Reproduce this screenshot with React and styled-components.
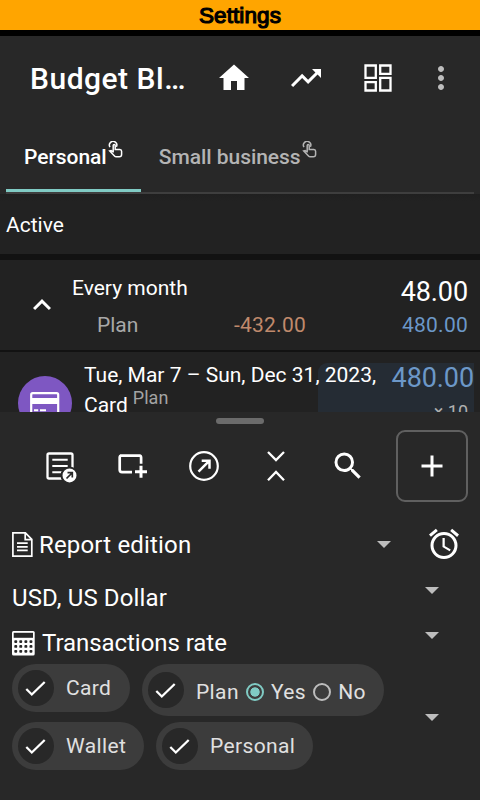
import React from "react";
import styled, { createGlobalStyle } from "styled-components";
import { MdHome, MdTrendingUp, MdMoreVert, MdSearch, MdAdd, MdAlarm, MdExpandLess } from "react-icons/md";

const Global = createGlobalStyle`
  * { box-sizing: border-box; }
  body { margin: 0; background: #282828; overflow: hidden; }
`;

const Screen = styled.div`
  width: 480px;
  height: 800px;
  display: flex;
  flex-direction: column;
  overflow: hidden;
  background: #222222;
  color: #ffffff;
  font-family: Roboto, sans-serif;
  white-space: nowrap;
`;

const Banner = styled.div`
  height: 36px;
  flex: none;
  background: #ffa500;
  border-bottom: 6px solid #000000;
  color: #000000;
  font: 22.5px/32px "Liberation Sans", sans-serif;
  -webkit-text-stroke: 1.2px #000000;
  letter-spacing: 0.1px;
  text-align: center;
`;

const AppBar = styled.header`
  height: 84px;
  flex: none;
  display: flex;
  align-items: center;
  padding-left: 30px;
  background: #282828;
`;

const Title = styled.h1`
  width: 168px;
  margin: 0;
  font-size: 30px;
  line-height: 36px;
  font-weight: 500;
  padding-top: 1px;
  letter-spacing: 0.5px;
`;

const BarAction = styled.button`
  width: ${(p) => p.$width || 72}px;
  height: 72px;
  padding: 0;
  border: 0;
  background: none;
  color: ${(p) => p.$color || "#ffffff"};
  display: flex;
  align-items: center;
  justify-content: center;
  svg { flex: none; }
`;

const AlarmAction = styled(BarAction)`
  margin-bottom: 1px;
`;

const Tabs = styled.nav`
  height: 74px;
  flex: none;
  padding: 0 6px;
  background: #282828;
`;

const TabStrip = styled.div`
  height: 74px;
  display: flex;
  border-bottom: 2px solid #3e3e3e;
`;

const Tab = styled.div`
  height: 72px;
  padding: 0 18px;
  display: flex;
  align-items: flex-start;
  border-bottom: 3px solid ${(p) => (p.$active ? "#80cbc4" : "transparent")};
  color: ${(p) => (p.$active ? "#ffffff" : "#b4b4b4")};
  font-size: 21px;
  line-height: 74px;
  font-weight: 500;
  letter-spacing: -0.05px;
  svg { margin: 21px 0 0 1.2px; }
`;

const Section = styled.div`
  height: 66px;
  flex: none;
  padding-left: 6px;
  font-size: 21px;
  line-height: 62px;
  background: linear-gradient(#1f1f1f, #222222 7px);
  border-bottom: 6px solid #121212;
`;

const Group = styled.div`
  height: 92px;
  flex: none;
  display: grid;
  grid-template-columns: 72px 1fr auto;
  padding-right: 12px;
  border-bottom: 2px solid #121212;
`;

const Toggle = styled.div`
  padding: 27px 0 0 24px;
`;

const GroupText = styled.div`
  display: flex;
  flex-direction: column;
  font-size: 21px;
  line-height: 37px;
  padding-top: 10px;
`;

const PlanLine = styled.div`
  display: flex;
  justify-content: space-between;
  width: 234px;
  padding-left: 25px;
  color: #a8a8a8;
`;

const Amount = styled.span`
  color: ${(p) => (p.$kind === "out" ? "#c08a6c" : p.$kind === "in" ? "#6c98c8" : "#ffffff")};
  font-size: ${(p) => (p.$large ? 27 : 21)}px;
  letter-spacing: ${(p) => (p.$large ? -0.1 : 0.25)}px;
`;

const Totals = styled(GroupText)`
  align-items: flex-end;
  padding-top: 16px;
  line-height: 33px;
`;

const Entry = styled.div`
  height: 60px;
  flex: none;
  display: flex;
  overflow: hidden;
`;

const Avatar = styled.div`
  width: 54px;
  height: 54px;
  flex: none;
  margin: 24px 12px 0 18px;
  border-radius: 50%;
  background: #7e57c2;
  display: flex;
  align-items: center;
  justify-content: center;
`;

const EntryText = styled.div`
  width: 234px;
  flex: none;
  font-size: 21px;
  line-height: 30px;
  padding-top: 8px;
  position: relative;
  z-index: 1;
`;

const Note = styled.span`
  display: inline-block;
  margin-left: 5px;
  font-size: 18px;
  line-height: 20px;
  transform: translateY(-8px);
  color: #a4a4a4;
`;

const EntryAmount = styled.div`
  width: 156px;
  height: 80px;
  flex: none;
  margin-top: 11px;
  border-radius: 9px 0 0 0;
  background: #252c34;
  display: flex;
  flex-direction: column;
  align-items: flex-end;
  line-height: 30px;
`;

const Times = styled.span`
  padding: 4px 6px 0 0;
  font-size: 18px;
  color: #b0b0b0;
`;

const Sheet = styled.section`
  flex: 1;
  display: flex;
  flex-direction: column;
  background: #282828;
`;

const Handle = styled.div`
  width: 48px;
  height: 6px;
  flex: none;
  margin: 6px auto;
  border-radius: 3px;
  background: #6b6b6b;
`;

const Toolbar = styled.div`
  height: 72px;
  display: flex;
  flex: none;
  padding-left: 24px;
`;

const AddButton = styled(BarAction)`
  margin-left: 12px;
  border: 2px solid #606060;
  border-radius: 9px;
`;

const Field = styled.div`
  height: ${(p) => p.$height}px;
  flex: none;
  display: flex;
  align-items: center;
  padding: 0 0 ${(p) => p.$below || 0}px 12px;
  font-size: 24px;
`;

const FieldText = styled.span`
  flex: 1;
  padding-left: ${(p) => p.$gap || 0}px;
  letter-spacing: ${(p) => p.$spacing || 0}px;
`;

const Caret = styled.span`
  width: 0;
  height: 0;
  flex: none;
  border: 7.5px solid transparent;
  border-top-color: #bdbdbd;
  border-bottom: 0;
  margin: 0 ${(p) => p.$right}px ${(p) => p.$lift || 0}px 0;
`;

const Filters = styled.div`
  display: flex;
  align-items: center;
  height: 106px;
  flex: none;
  padding-left: 12px;
`;

const ChipRows = styled.div`
  flex: 1;
  display: flex;
  flex-direction: column;
  gap: 6px;
`;

const ChipRow = styled.div`
  display: flex;
  align-items: flex-start;
  gap: 12px;
`;

const Chip = styled.div`
  height: ${(p) => p.$height || 48}px;
  width: ${(p) => p.$width}px;
  display: flex;
  align-items: center;
  padding-left: 6px;
  border-radius: 26px;
  background: #3c3c3c;
  color: #e0e0e0;
  font-size: 21px;
  letter-spacing: 0.37px;
`;

const CheckCircle = styled.span`
  width: 36px;
  height: 36px;
  margin-right: 12px;
  border-radius: 50%;
  background: #282828;
`;

const ChipLabel = styled.span`
  line-height: 24px;
  padding-top: ${(p) => p.$drop || 0}px;
`;

const Radio = styled.span`
  width: 18px;
  height: 18px;
  margin: 4px 7.2px 0 7px;
  border-radius: 50%;
  border: 2px solid ${(p) => (p.$on ? "#80cbc4" : "#bdbdbd")};
  background: ${(p) => (p.$on ? "radial-gradient(circle, #80cbc4 4.3px, transparent 5px)" : "none")};
`;

const TapIcon = () => (
  <svg width="15" height="17" viewBox="0 0 15 17" fill="none" stroke="currentColor" strokeWidth="1.5">
    <path d="M2 6.1A3.7 3.7 0 1 1 8.4 5.8" />
    <path d="M5.2 11.5V4.6a1 1 0 0 1 2 0v3.8h4.6q1.8.2 1.8 1.8v3.2q0 2.3-2.3 2.3H8.2q-1 0-1.7-.8L1.7 10l1.5-.4 2 1.4" />
  </svg>
);

const DashboardIcon = () => (
  <svg width="36" height="36" fill="none" stroke="currentColor" strokeWidth="2.3">
    <path d="M5.5 5.5h10.3v12.3H5.5zM20.2 5.5h10.3v8.3H20.2zM5.5 22.2h10.3v8.3H5.5zM20.2 17.9h10.3v12.6H20.2z" />
  </svg>
);

const CardIcon = () => (
  <svg width="30" height="26" viewBox="0 0 30 26">
    <rect x="1.2" y="3.2" width="27" height="21" rx="1.5" fill="none" stroke="#fff" strokeWidth="2.2" />
    <path d="M1 8h28v6H1z" fill="#fff" />
    <path d="M4 20.3h4.2M10 20.3h6" stroke="#fff" strokeWidth="2" />
  </svg>
);

const ReportIcon = () => (
  <svg width="36" height="36" fill="none" stroke="currentColor" strokeWidth="2.3">
    <rect x="5.5" y="5.5" width="25" height="25" rx="1.5" />
    <path d="M10.3 11.7h15.4M10.3 18h15.4M10.3 24.3h12" strokeWidth="2" />
    <circle cx="27.5" cy="27.4" r="8" fill="#fff" stroke="#282828" strokeWidth="2" />
    <path d="M24.5 30.5l5.5-5.5M25.5 24.7h4.8v4.8" stroke="#282828" strokeWidth="1.7" />
  </svg>
);

const AddWindowIcon = () => (
  <svg width="36" height="36" fill="none" stroke="currentColor" strokeWidth="2.7">
    <path d="M18 24.1H8q-2.3 0-2.3-2.3V9.5q0-2 2-2h17.4q2 0 2 2v6.3M6 7.7h20.5" />
    <path d="M27 17.7v12M21 23.7h12" strokeWidth="3" />
  </svg>
);

const OpenIcon = () => (
  <svg width="36" height="36" fill="none" stroke="currentColor" strokeWidth="2.2">
    <circle cx="18" cy="18" r="13.8" />
    <path d="M12.5 23.7L23 13.2M15.7 12.7h7.8v8" strokeWidth="2.5" />
  </svg>
);

const CollapseIcon = () => (
  <svg width="36" height="36" fill="none" stroke="currentColor" strokeWidth="2.3">
    <path d="M10 4l8 8 8-8M10 32.3l8-8.3 8 8.3" />
  </svg>
);

const DocumentIcon = () => (
  <svg width="21" height="25" fill="none" stroke="currentColor" strokeWidth="1.7">
    <path d="M.9.9h12.5l6.4 6.4v16.8H.9zM13.2.9v6.7h6.6M5 11.2h10.7M5 14.8h10.7M5 18.4h10.7" />
  </svg>
);

const CalculatorIcon = () => (
  <svg width="23" height="25">
    <rect width="22.7" height="24.5" rx="1.5" fill="currentColor" />
    <path d="M1.7 1.8h19.3v5H1.7z" fill="#282828" />
    {[9.2, 14, 18.9].map((y) =>
      [2.3, 7.3, 12.4, 17.5].map((x) => (
        <rect key={`${x}-${y}`} x={x} y={y} width="2.9" height="2.8" rx="0.9" fill="#282828" />
      ))
    )}
  </svg>
);

const Check = () => (
  <CheckCircle>
    <svg width="36" height="36" fill="none" stroke="#fff" strokeWidth="2.3">
      <path d="M8.3 19l5.5 5.5L26.7 12" />
    </svg>
  </CheckCircle>
);

export default function App() {
  return (
    <Screen>
      <Global />
      <Banner>Settings</Banner>
      <AppBar>
        <Title>Budget Bl…</Title>
        <BarAction><MdHome size={36} /></BarAction>
        <BarAction><MdTrendingUp size={36} /></BarAction>
        <BarAction><DashboardIcon /></BarAction>
        <BarAction $width={54} $color="#bdbdbd"><MdMoreVert size={36} /></BarAction>
      </AppBar>
      <Tabs>
        <TabStrip>
          <Tab $active>Personal<TapIcon /></Tab>
          <Tab>Small business<TapIcon /></Tab>
        </TabStrip>
      </Tabs>
      <Section>Active</Section>
      <Group>
        <Toggle><MdExpandLess size={36} /></Toggle>
        <GroupText>
          <span>Every month</span>
          <PlanLine><span>Plan</span><Amount $kind="out">-432.00</Amount></PlanLine>
        </GroupText>
        <Totals>
          <Amount $large>48.00</Amount>
          <Amount $kind="in">480.00</Amount>
        </Totals>
      </Group>
      <Entry>
        <Avatar><CardIcon /></Avatar>
        <EntryText>
          Tue, Mar 7 – Sun, Dec 31, 2023,
          <br />
          Card<Note>Plan</Note>
        </EntryText>
        <EntryAmount>
          <Amount $large $kind="in">480.00</Amount>
          <Times>× 10</Times>
        </EntryAmount>
      </Entry>
      <Sheet>
        <Handle />
        <Toolbar>
          <BarAction><ReportIcon /></BarAction>
          <BarAction><AddWindowIcon /></BarAction>
          <BarAction><OpenIcon /></BarAction>
          <BarAction><CollapseIcon /></BarAction>
          <BarAction><MdSearch size={36} /></BarAction>
          <AddButton><MdAdd size={36} /></AddButton>
        </Toolbar>
        <Field $height={85}>
          <DocumentIcon />
          <FieldText $gap={6} $spacing={0.17}>Report edition</FieldText>
          <Caret $right={17} />
          <AlarmAction><MdAlarm size={36} /></AlarmAction>
        </Field>
        <Field $height={35} $below={14}>
          <FieldText $spacing={0.13}>USD, US Dollar</FieldText>
          <Caret $right={41} $lift={14} />
        </Field>
        <Field $height={42}>
          <CalculatorIcon />
          <FieldText $gap={7} $spacing={-0.05}>Transactions rate</FieldText>
          <Caret $right={41} $lift={15} />
        </Field>
        <Filters>
          <ChipRows>
            <ChipRow>
              <Chip $width={118}><Check /><ChipLabel>Card</ChipLabel></Chip>
              <Chip $width={242} $height={52}>
                <Check />
                <ChipLabel $drop={3}>Plan</ChipLabel>
                <Radio $on />
                <ChipLabel $drop={3}>Yes</ChipLabel>
                <Radio />
                <ChipLabel $drop={3}>No</ChipLabel>
              </Chip>
            </ChipRow>
            <ChipRow>
              <Chip $width={132}><Check /><ChipLabel>Wallet</ChipLabel></Chip>
              <Chip $width={157}><Check /><ChipLabel>Personal</ChipLabel></Chip>
            </ChipRow>
          </ChipRows>
          <Caret $right={41} />
        </Filters>
      </Sheet>
    </Screen>
  );
}
